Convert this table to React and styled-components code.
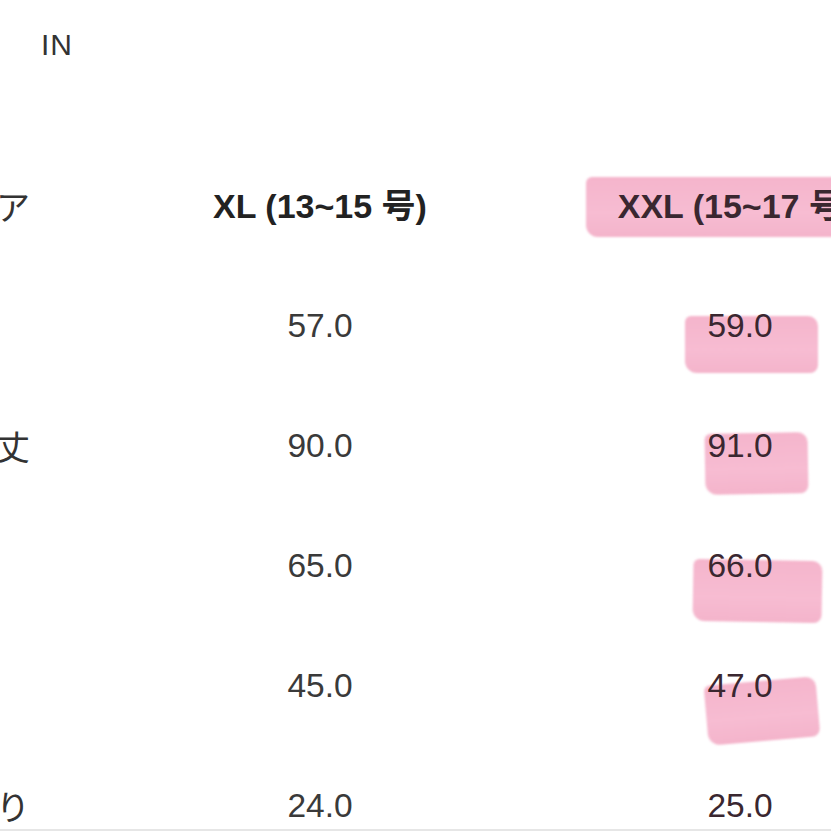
import React from "react";
import styled, { createGlobalStyle } from "styled-components";

const Global = createGlobalStyle`
  html, body { margin: 0; padding: 0; background: #ffffff; }
  body { overflow: hidden; }
`;

const Page = styled.div`
  position: relative;
  width: 831px;
  height: 831px;
  box-sizing: border-box;
  overflow: hidden;
  background: #ffffff;
  border-bottom: 2px solid #e6e6e6;
  font-family: "Liberation Sans", "Noto Sans CJK JP", sans-serif;
  color: #333333;
`;

const Unit = styled.div`
  padding: 30px 0 0 41px;
  height: 30px;
  font-size: 30px;
  line-height: 1;
  letter-spacing: 1px;
  color: #333333;
`;

const Table = styled.div`
  display: grid;
  grid-template-columns: 182px 420px 420px;
  grid-auto-rows: 120px;
  margin-top: 86px;
  margin-left: -72px;
`;

const Cell = styled.div`
  display: flex;
  align-items: center;
  justify-content: center;
  white-space: nowrap;
  line-height: 1;
`;

const Label = styled(Cell)`
  justify-content: flex-start;
  font-family: "Noto Sans CJK JP", sans-serif;
  font-size: 34px;
  color: #333333;
`;

const Head = styled(Cell)`
  font-size: 34px;
  font-weight: 700;
  color: #222222;
`;

const Value = styled(Cell)`
  font-size: 33.5px;
  font-weight: 400;
  color: #3a3a3a;
`;

const Mark = styled.span`
  position: relative;
  z-index: 0;
  isolation: isolate;
  display: inline-block;
  margin-right: ${(p) => p.$shift || 0}px;
  color: #3a2730;
`;

const Swatch = styled.span`
  position: absolute;
  z-index: -1;
  left: ${(p) => p.$left}px;
  top: ${(p) => p.$top}px;
  width: ${(p) => p.$width}px;
  height: ${(p) => p.$height}px;
  transform: rotate(${(p) => p.$rotate || 0}deg);
  background: linear-gradient(180deg, #f5b5cc 0%, #f7bcd2 60%, #f4b4cb 100%);
  border-radius: 6px 10px 8px 12px;
  filter: blur(1px);
`;

const rows = [
  { label: "身幅", xl: "57.0", xxl: "59.0", hl: { left: -22, top: 7, width: 133, height: 57 } },
  { label: "総着丈", xl: "90.0", xxl: "91.0", hl: { left: -2, top: 4, width: 103, height: 61, rotate: -1 } },
  { label: "袖丈", xl: "65.0", xxl: "66.0", hl: { left: -14, top: 11, width: 129, height: 62, rotate: 1 } },
  { label: "肩幅", xl: "45.0", xxl: "47.0", hl: { left: -1, top: 12, width: 112, height: 60, rotate: -5 } },
  { label: "腕周り", xl: "24.0", xxl: "25.0", hl: null },
];

export default function App() {
  return (
    <Page>
      <Global />
      <Unit>IN</Unit>
      <Table>
        <Label>エリア</Label>
        <Head>XL (13~15 号)</Head>
        <Head>
          <Mark $shift={8}>
            <Swatch $left={-32} $top={-12} $width={300} $height={60} />
            XXL (15~17 号)
          </Mark>
        </Head>
        {rows.map((r) => (
          <React.Fragment key={r.label}>
            <Label>{r.label}</Label>
            <Value>{r.xl}</Value>
            <Value>
              <Mark>
                {r.hl && (
                  <Swatch
                    $left={r.hl.left}
                    $top={r.hl.top}
                    $width={r.hl.width}
                    $height={r.hl.height}
                    $rotate={r.hl.rotate}
                  />
                )}
                {r.xxl}
              </Mark>
            </Value>
          </React.Fragment>
        ))}
      </Table>
    </Page>
  );
}
